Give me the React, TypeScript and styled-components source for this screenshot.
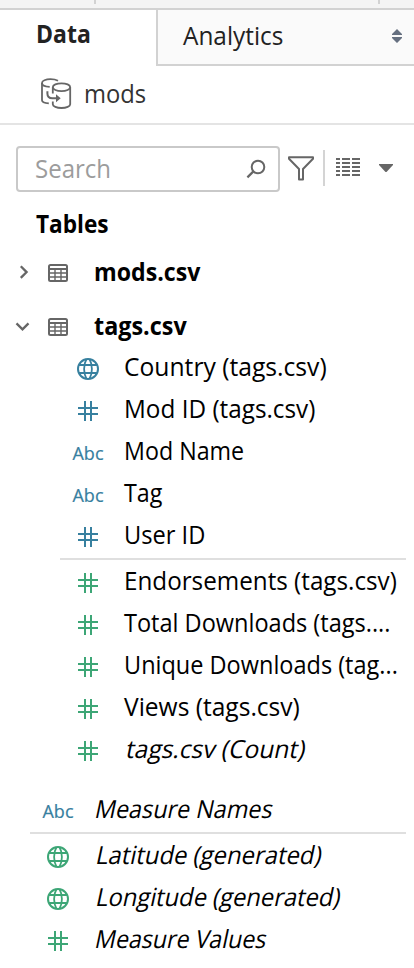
import React from 'react';
import styled, { createGlobalStyle } from 'styled-components';

const BLUE = '#37809f';
const GREEN = '#3da676';
const GRAY = '#666666';

const GlobalStyle = createGlobalStyle`
  *, *::before, *::after { box-sizing: border-box; }
  body {
    margin: 0;
    background: #ffffff;
    color: #000000;
    font-family: "Open Sans", "Noto Sans", sans-serif;
    overflow: hidden;
  }
  svg { display: block; flex: none; }
`;

const Pane = styled.main`
  display: flex;
  flex-direction: column;
  width: 414px;
  height: 968px;
  background: #ffffff;
`;

const TopStrip = styled.div`
  display: flex;
  justify-content: space-between;
  height: 10px;
  padding: 0 34px 0 94px;
  background: #f4f4f4;
  border-bottom: 2px solid #d2d2d2;
`;

const Tick = styled.span`
  width: 2px;
  height: 4px;
  background: #d2d2d2;
`;

const Tabs = styled.nav`
  display: flex;
  height: 56px;
`;

const Tab = styled.div<{ $active?: boolean }>`
  display: flex;
  align-items: center;
  width: ${p => (p.$active ? '156px' : '258px')};
  padding: ${p => (p.$active ? '0 0 8px 36px' : '0 12px 3px 25px')};
  background: ${p => (p.$active ? '#ffffff' : '#fafafa')};
  border: solid #d2d2d2;
  border-width: ${p => (p.$active ? '0' : '0 0 2px 2px')};
  color: #222222;
`;

const TabArrows = styled.svg`
  margin: 0 0 0 auto;
`;

/* Text squeezed horizontally to the condensed proportions of the panel's type. */
const Label = styled.span<{ $k?: number; $dx?: number; $bold?: boolean; $slant?: boolean; $color?: string }>`
  flex: none;
  margin-left: ${p => p.$dx ?? 0}px;
  font-size: 25px;
  line-height: 42px;
  font-weight: ${p => (p.$bold ? 700 : 400)};
  color: ${p => p.$color ?? 'inherit'};
  white-space: nowrap;
  transform-origin: 0 30px;
  transform: translateY(-1px) ${p => (p.$slant ? 'skewX(-12deg) ' : '')}scaleX(${p => p.$k ?? 1});
`;

const DataSource = styled.div`
  display: flex;
  align-items: center;
  height: 59px;
  padding: 0 0 2px 40px;
  border-bottom: 2px solid #e4e4e4;
  color: #333333;
`;

const SourceName = styled.div`
  display: flex;
  margin-left: 12px;
`;

const Toolbar = styled.div`
  display: flex;
  align-items: center;
  height: 46px;
  margin: 21px 0 0 16px;
`;

const SearchBox = styled.div`
  display: flex;
  align-items: center;
  width: 264px;
  height: 46px;
  padding: 0 12px 0 17px;
  border: 2px solid #c9c9c9;
  border-radius: 4px;
`;

const SearchIcon = styled.svg`
  margin-left: auto;
`;

const FilterIcon = styled.svg`
  margin: -2px 0 0 8px;
`;

const Separator = styled.span`
  width: 2px;
  height: 36px;
  margin: -2px 11px 0 9px;
  background: #d4d4d4;
`;

const ListIcon = styled.svg`
  margin-top: -4px;
`;

const Caret = styled.svg`
  margin: -2px 0 0 19px;
`;

const Heading = styled.h2`
  display: flex;
  height: 42px;
  margin: 11px 0 0 36px;
`;

const TableRow = styled.div<{ $gap: number }>`
  display: flex;
  align-items: center;
  height: 42px;
  margin-top: ${p => p.$gap}px;
  padding-left: 15px;
`;

const TableGlyph = styled.svg`
  margin: 2px 26px 0 18px;
`;

const FieldRow = styled.div<{ $indent: number }>`
  display: flex;
  align-items: center;
  height: 42px;
  flex: none;
  padding-left: ${p => p.$indent}px;
`;

const TypeCell = styled.span`
  display: flex;
  justify-content: center;
  align-items: center;
  flex: none;
  width: 32px;
  height: 24px;
  margin: 4px 19px 0 0;
`;

const Abc = styled.span`
  font-size: 18px;
  line-height: 24px;
  color: ${BLUE};
  -webkit-text-stroke: 0.2px ${BLUE};
`;

const Divider = styled.hr<{ $left: number }>`
  flex: none;
  width: auto;
  height: 2px;
  margin: 2px 8px 0 ${p => p.$left}px;
  border: 0;
  background: #dfdfdf;
`;

const Group = styled.section<{ $gap?: number }>`
  display: flex;
  flex-direction: column;
  margin-top: ${p => p.$gap ?? 0}px;
`;

type Kind = 'globe' | 'hash' | 'abc';

function TypeIcon({ kind, color }: { kind: Kind; color: string }) {
  if (kind === 'abc') return <Abc>Abc</Abc>;
  if (kind === 'hash') {
    return (
      <svg width="20" height="20" viewBox="0 0 20 20" stroke={color} strokeWidth="2" fill="none">
        <path d="M7 0v20M13 0v20M0 7h20M0 13h20" />
      </svg>
    );
  }
  return (
    <svg width="22" height="22" viewBox="0 0 22 22" stroke={color} fill="none">
      <circle cx="11" cy="11" r="10" strokeWidth="2" />
      <path
        d="M2 7h18M2 15h18M9.5 1C6.3 7 6.3 15 9.5 21M12.5 1C15.7 7 15.7 15 12.5 21"
        strokeWidth="1.8"
      />
    </svg>
  );
}

function TableIcon() {
  return (
    <TableGlyph width="20" height="18" viewBox="0 0 20 18" fill="none" stroke={GRAY}>
      <rect x="1" y="1" width="18" height="16" rx="1.5" strokeWidth="2" />
      <path d="M1 5h18" strokeWidth="2" />
      <path d="M2 9h16M2 13h16M7 5v12M13 5v12" strokeWidth="1.4" />
    </TableGlyph>
  );
}

function Chevron({ open }: { open?: boolean }) {
  return (
    <svg width="15" height="16" viewBox="0 0 15 16" fill="none" stroke={GRAY} strokeWidth="2.3">
      <path d={open ? 'M1.5 5.4l6 6 6-6' : 'M5.8 2.3l5.8 5.8-5.8 5.8'} />
    </svg>
  );
}

interface Field {
  name: string;
  kind: Kind;
  k: number;
  dx?: number;
  slant?: boolean;
}

const dimensions: Field[] = [
  { name: 'Country (tags.csv)', kind: 'globe', k: 0.986, dx: 0.8 },
  { name: 'Mod ID (tags.csv)', kind: 'hash', k: 0.972, dx: 0.8 },
  { name: 'Mod Name', kind: 'abc', k: 0.93, dx: 0.8 },
  { name: 'Tag', kind: 'abc', k: 0.93, dx: 1.2 },
  { name: 'User ID', kind: 'hash', k: 0.945, dx: 0.8 },
];

const measures: Field[] = [
  { name: 'Endorsements (tags.csv)', kind: 'hash', k: 0.969, dx: 0.8 },
  { name: 'Total Downloads (tags....', kind: 'hash', k: 0.941, dx: 1.2 },
  { name: 'Unique Downloads (tag...', kind: 'hash', k: 0.94, dx: 0.8 },
  { name: 'Views (tags.csv)', kind: 'hash', k: 0.982, dx: 1.2 },
  { name: 'tags.csv (Count)', kind: 'hash', k: 0.98, dx: 1.5, slant: true },
];

const generated: Field[] = [
  { name: 'Latitude (generated)', kind: 'globe', k: 0.954, dx: 1.6, slant: true },
  { name: 'Longitude (generated)', kind: 'globe', k: 0.949, dx: 1.6, slant: true },
  { name: 'Measure Values', kind: 'hash', k: 0.927, dx: 1.4, slant: true },
];

const measureNames: Field = { name: 'Measure Names', kind: 'abc', k: 0.933, dx: 1.4, slant: true };

function FieldItem({ field, color, indent }: { field: Field; color: string; indent: number }) {
  return (
    <FieldRow $indent={indent}>
      <TypeCell>
        <TypeIcon kind={field.kind} color={color} />
      </TypeCell>
      <Label $k={field.k} $dx={field.dx} $slant={field.slant}>{field.name}</Label>
    </FieldRow>
  );
}

export default function App() {
  return (
    <Pane>
      <GlobalStyle />
      <TopStrip>
        <Tick />
        <Tick />
      </TopStrip>
      <Tabs>
        <Tab $active>
          <Label $bold $k={0.92}>Data</Label>
        </Tab>
        <Tab>
          <Label $k={0.975}>Analytics</Label>
          <TabArrows width="10" height="14" viewBox="0 0 10 14" fill="#667080">
            <path d="M5 0l5 5v1H0V5zM0 8h10v1l-5 5-5-5z" />
          </TabArrows>
        </Tab>
      </Tabs>
      <DataSource>
        <svg width="32" height="31" viewBox="0 0 32 31" fill="none" stroke={GRAY} strokeWidth="1.8">
          <path d="M18 2.8C16 1.7 13.5 1.2 10.5 1.2C5.7 1.2 2 2.8 2 4.9S5 8.6 9.7 8.8" />
          <path d="M2 4.9v17.3C2 23.8 4.5 25 8.8 25.4" />
          <ellipse cx="21.5" cy="9.2" rx="8.7" ry="3.9" />
          <path d="M12.8 9.2v6.2M12.8 23.6v2.6c0 2.1 3.8 3.8 8.7 3.8s8.7-1.7 8.7-3.8v-17" />
          <path d="M7.4 13.3v2.2c0 3.2 1.8 4.8 5 4.8h4.1" strokeWidth="2" />
          <path d="M16 16.3l4.7 4-4.7 4z" fill={GRAY} stroke="none" />
        </svg>
        <SourceName>
          <Label $k={0.95}>mods</Label>
        </SourceName>
      </DataSource>
      <Toolbar>
        <SearchBox>
          <Label $k={0.96} $color="#9c9c9c">Search</Label>
          <SearchIcon width="20" height="20" viewBox="0 0 20 20" fill="none" stroke={GRAY} strokeWidth="2">
            <circle cx="12" cy="8" r="6.3" />
            <path d="M7.4 12.4L1.4 18.4" strokeWidth="2.2" />
          </SearchIcon>
        </SearchBox>
        <FilterIcon width="26" height="25" viewBox="0 0 26 25" fill="none" stroke={GRAY} strokeWidth="2" strokeLinejoin="round">
          <path d="M1 1.2h24v1.6L15 13v10.6h-4V13L1 2.8z" />
        </FilterIcon>
        <Separator />
        <ListIcon width="24" height="18" viewBox="0 0 24 18" stroke={GRAY} strokeWidth="2">
          <path d="M0 1h4M6 1h8M16 1h8M0 5h4M6 5h8M16 5h8M0 9h4M6 9h8M16 9h8M0 13h4M6 13h8M16 13h8M0 17h4M6 17h8M16 17h8" />
        </ListIcon>
        <Caret width="14" height="8" viewBox="0 0 14 8" fill={GRAY}>
          <path d="M0 0h14v1L7.5 8h-1L0 1z" />
        </Caret>
      </Toolbar>
      <Heading>
        <Label $bold $k={0.905}>Tables</Label>
      </Heading>
      <TableRow $gap={6}>
        <Chevron />
        <TableIcon />
        <Label $bold $k={0.925}>mods.csv</Label>
      </TableRow>
      <TableRow $gap={12}>
        <Chevron open />
        <TableIcon />
        <Label $bold $k={0.935}>tags.csv</Label>
      </TableRow>
      <Group $gap={-1}>
        {dimensions.map(f => <FieldItem key={f.name} field={f} color={BLUE} indent={72} />)}
      </Group>
      <Divider $left={60} />
      <Group>
        {measures.map(f => <FieldItem key={f.name} field={f} color={GREEN} indent={72} />)}
      </Group>
      <Group $gap={18}>
        <FieldItem field={measureNames} color={BLUE} indent={42} />
      </Group>
      <Divider $left={30} />
      <Group>
        {generated.map(f => <FieldItem key={f.name} field={f} color={GREEN} indent={42} />)}
      </Group>
    </Pane>
  );
}
